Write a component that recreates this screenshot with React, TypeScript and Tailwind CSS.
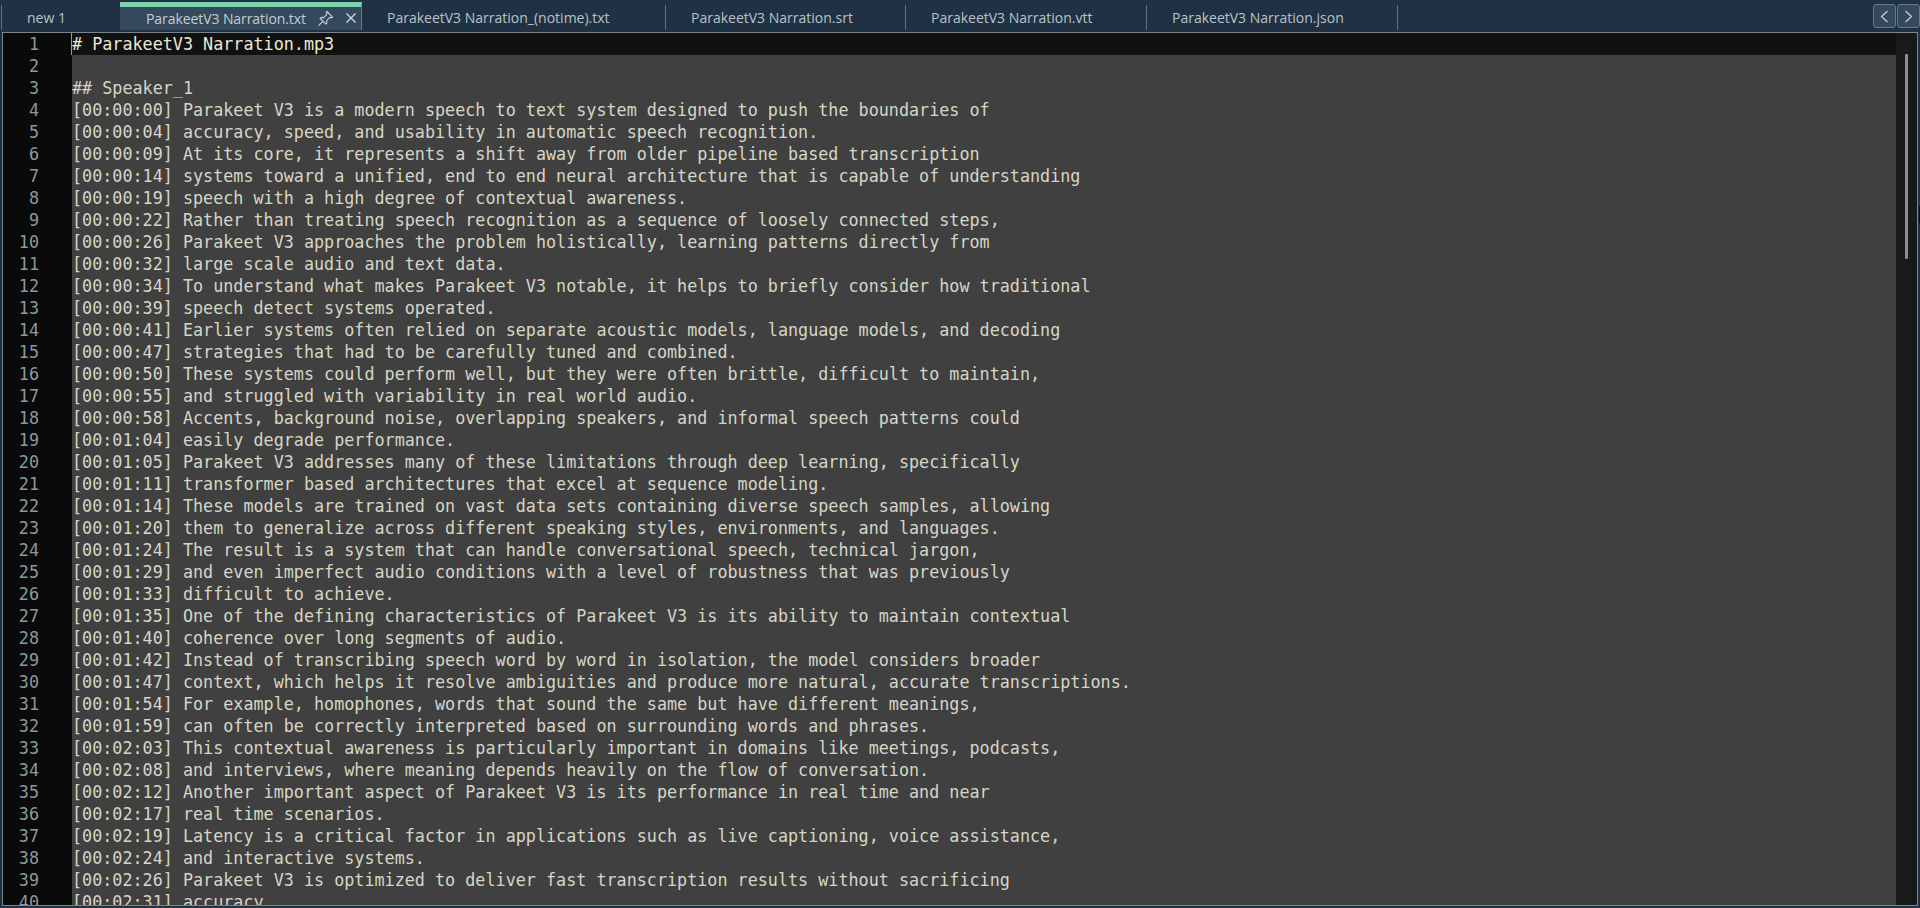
const lines = [
"# ParakeetV3 Narration.mp3",
"",
"## Speaker_1",
"[00:00:00] Parakeet V3 is a modern speech to text system designed to push the boundaries of",
"[00:00:04] accuracy, speed, and usability in automatic speech recognition.",
"[00:00:09] At its core, it represents a shift away from older pipeline based transcription",
"[00:00:14] systems toward a unified, end to end neural architecture that is capable of understanding",
"[00:00:19] speech with a high degree of contextual awareness.",
"[00:00:22] Rather than treating speech recognition as a sequence of loosely connected steps,",
"[00:00:26] Parakeet V3 approaches the problem holistically, learning patterns directly from",
"[00:00:32] large scale audio and text data.",
"[00:00:34] To understand what makes Parakeet V3 notable, it helps to briefly consider how traditional",
"[00:00:39] speech detect systems operated.",
"[00:00:41] Earlier systems often relied on separate acoustic models, language models, and decoding",
"[00:00:47] strategies that had to be carefully tuned and combined.",
"[00:00:50] These systems could perform well, but they were often brittle, difficult to maintain,",
"[00:00:55] and struggled with variability in real world audio.",
"[00:00:58] Accents, background noise, overlapping speakers, and informal speech patterns could",
"[00:01:04] easily degrade performance.",
"[00:01:05] Parakeet V3 addresses many of these limitations through deep learning, specifically",
"[00:01:11] transformer based architectures that excel at sequence modeling.",
"[00:01:14] These models are trained on vast data sets containing diverse speech samples, allowing",
"[00:01:20] them to generalize across different speaking styles, environments, and languages.",
"[00:01:24] The result is a system that can handle conversational speech, technical jargon,",
"[00:01:29] and even imperfect audio conditions with a level of robustness that was previously",
"[00:01:33] difficult to achieve.",
"[00:01:35] One of the defining characteristics of Parakeet V3 is its ability to maintain contextual",
"[00:01:40] coherence over long segments of audio.",
"[00:01:42] Instead of transcribing speech word by word in isolation, the model considers broader",
"[00:01:47] context, which helps it resolve ambiguities and produce more natural, accurate transcriptions.",
"[00:01:54] For example, homophones, words that sound the same but have different meanings,",
"[00:01:59] can often be correctly interpreted based on surrounding words and phrases.",
"[00:02:03] This contextual awareness is particularly important in domains like meetings, podcasts,",
"[00:02:08] and interviews, where meaning depends heavily on the flow of conversation.",
"[00:02:12] Another important aspect of Parakeet V3 is its performance in real time and near",
"[00:02:17] real time scenarios.",
"[00:02:19] Latency is a critical factor in applications such as live captioning, voice assistance,",
"[00:02:24] and interactive systems.",
"[00:02:26] Parakeet V3 is optimized to deliver fast transcription results without sacrificing",
"[00:02:31] accuracy",
];

const tabs = [
  { name: "ParakeetV3 Narration_(notime).txt", w: "w-[304px]" },
  { name: "ParakeetV3 Narration.srt", w: "w-[240px]" },
  { name: "ParakeetV3 Narration.vtt", w: "w-[241px]" },
  { name: "ParakeetV3 Narration.json", w: "w-[251px]" },
];

function Pin() {
  return (
    <svg width="17" height="17" viewBox="0 0 17 17" fill="none" stroke="#c8d0d4" strokeWidth="1.1">
      <path d="M10 1.5 L15.5 7 L14 7.8 L12.8 7.4 L9.6 10.6 L9.8 13 L8.8 14 L3.2 8.4 L4.2 7.4 L6.6 7.6 L9.8 4.4 L9.3 3 Z" />
      <path d="M5.6 11.6 L1.6 15.6" />
    </svg>
  );
}

function Close() {
  return (
    <svg width="12" height="12" viewBox="0 0 12 12" fill="none" stroke="#d4dade" strokeWidth="1.3">
      <path d="M1.5 1.5 L10.5 10.5 M10.5 1.5 L1.5 10.5" />
    </svg>
  );
}

export default function App() {
  return (
    <div className="relative h-[908px] w-[1920px] overflow-hidden bg-[#1f3142] flex flex-col">
      <div className="h-[32px] shrink-0 flex items-start font-['Open_Sans',sans-serif] text-[14px] text-[#b9c3cb]">
        <div className="mt-[5px] ml-[1px] h-[25px] w-[119px] border-l border-[#5c7080] pl-[25px] flex items-center">new 1</div>
        <div className="mt-[2px] h-[28px] w-[242px] bg-[#35495c] border-t-[5px] border-[#7dd3ae] border-r border-r-[#62788c] pl-[26px] flex items-center text-[#c3ccd3]">
          <span className="w-[171px] whitespace-nowrap tracking-[-0.08px]">ParakeetV3 Narration.txt</span>
          <span className="flex items-center gap-[11px] -mt-[1px]"><Pin /><Close /></span>
        </div>
        {tabs.map((t) => (
          <div key={t.name} className={`mt-[5px] h-[25px] ${t.w} border-r border-[#5c7080] pl-[25px] flex items-center whitespace-nowrap`}>{t.name}</div>
        ))}
        <div className="flex-1" />
        <div className="mt-[4px] flex gap-[1px] mr-[0px]">
          <div className="h-[24px] w-[23px] rounded-[3px] border border-[#63788c] bg-[#35495c] flex items-center justify-center">
            <svg width="9" height="13" viewBox="0 0 9 13" fill="none" stroke="#c4ccd2" strokeWidth="1.3"><path d="M7.5 1 L1.5 6.5 L7.5 12" /></svg>
          </div>
          <div className="h-[24px] w-[23px] rounded-[3px] border border-[#63788c] bg-[#35495c] flex items-center justify-center">
            <svg width="9" height="13" viewBox="0 0 9 13" fill="none" stroke="#c4ccd2" strokeWidth="1.3"><path d="M1.5 1 L7.5 6.5 L1.5 12" /></svg>
          </div>
        </div>
      </div>
      <div className="ml-[2px] mr-[2px] mb-[2px] flex-1 min-h-0 border border-[#7c858c] flex bg-[#404040] overflow-hidden font-['DejaVu_Sans_Mono',monospace] text-[16.75px] leading-[22px]">
        <div className="flex-1 min-w-0 overflow-hidden">
          {lines.map((l, i) => (
            <div key={i} className={`h-[22px] flex ${i === 0 ? "bg-[#111111]" : ""}`}>
              <div className="w-[69px] shrink-0 bg-[#0a0a0a] pr-[33px] text-right text-[#8b9a9c]">{i + 1}</div>
              <div className={`whitespace-pre ${i === 0 ? "text-[#ece8d4] border-l border-[#6fb09a] -ml-[1px]" : "text-[#d6d6c6]"}`}>{l}</div>
            </div>
          ))}
        </div>
        <div className="w-[21px] shrink-0 bg-[#191919] pl-[9px] pt-[21px]">
          <div className="w-[3px] h-[205px] bg-[#8c8c8c] rounded-[1px]" />
        </div>
      </div>
      <div className="absolute right-0 top-[206px] h-[17px] w-[1px] bg-[#0a0a1e]" />
    </div>
  );
}
